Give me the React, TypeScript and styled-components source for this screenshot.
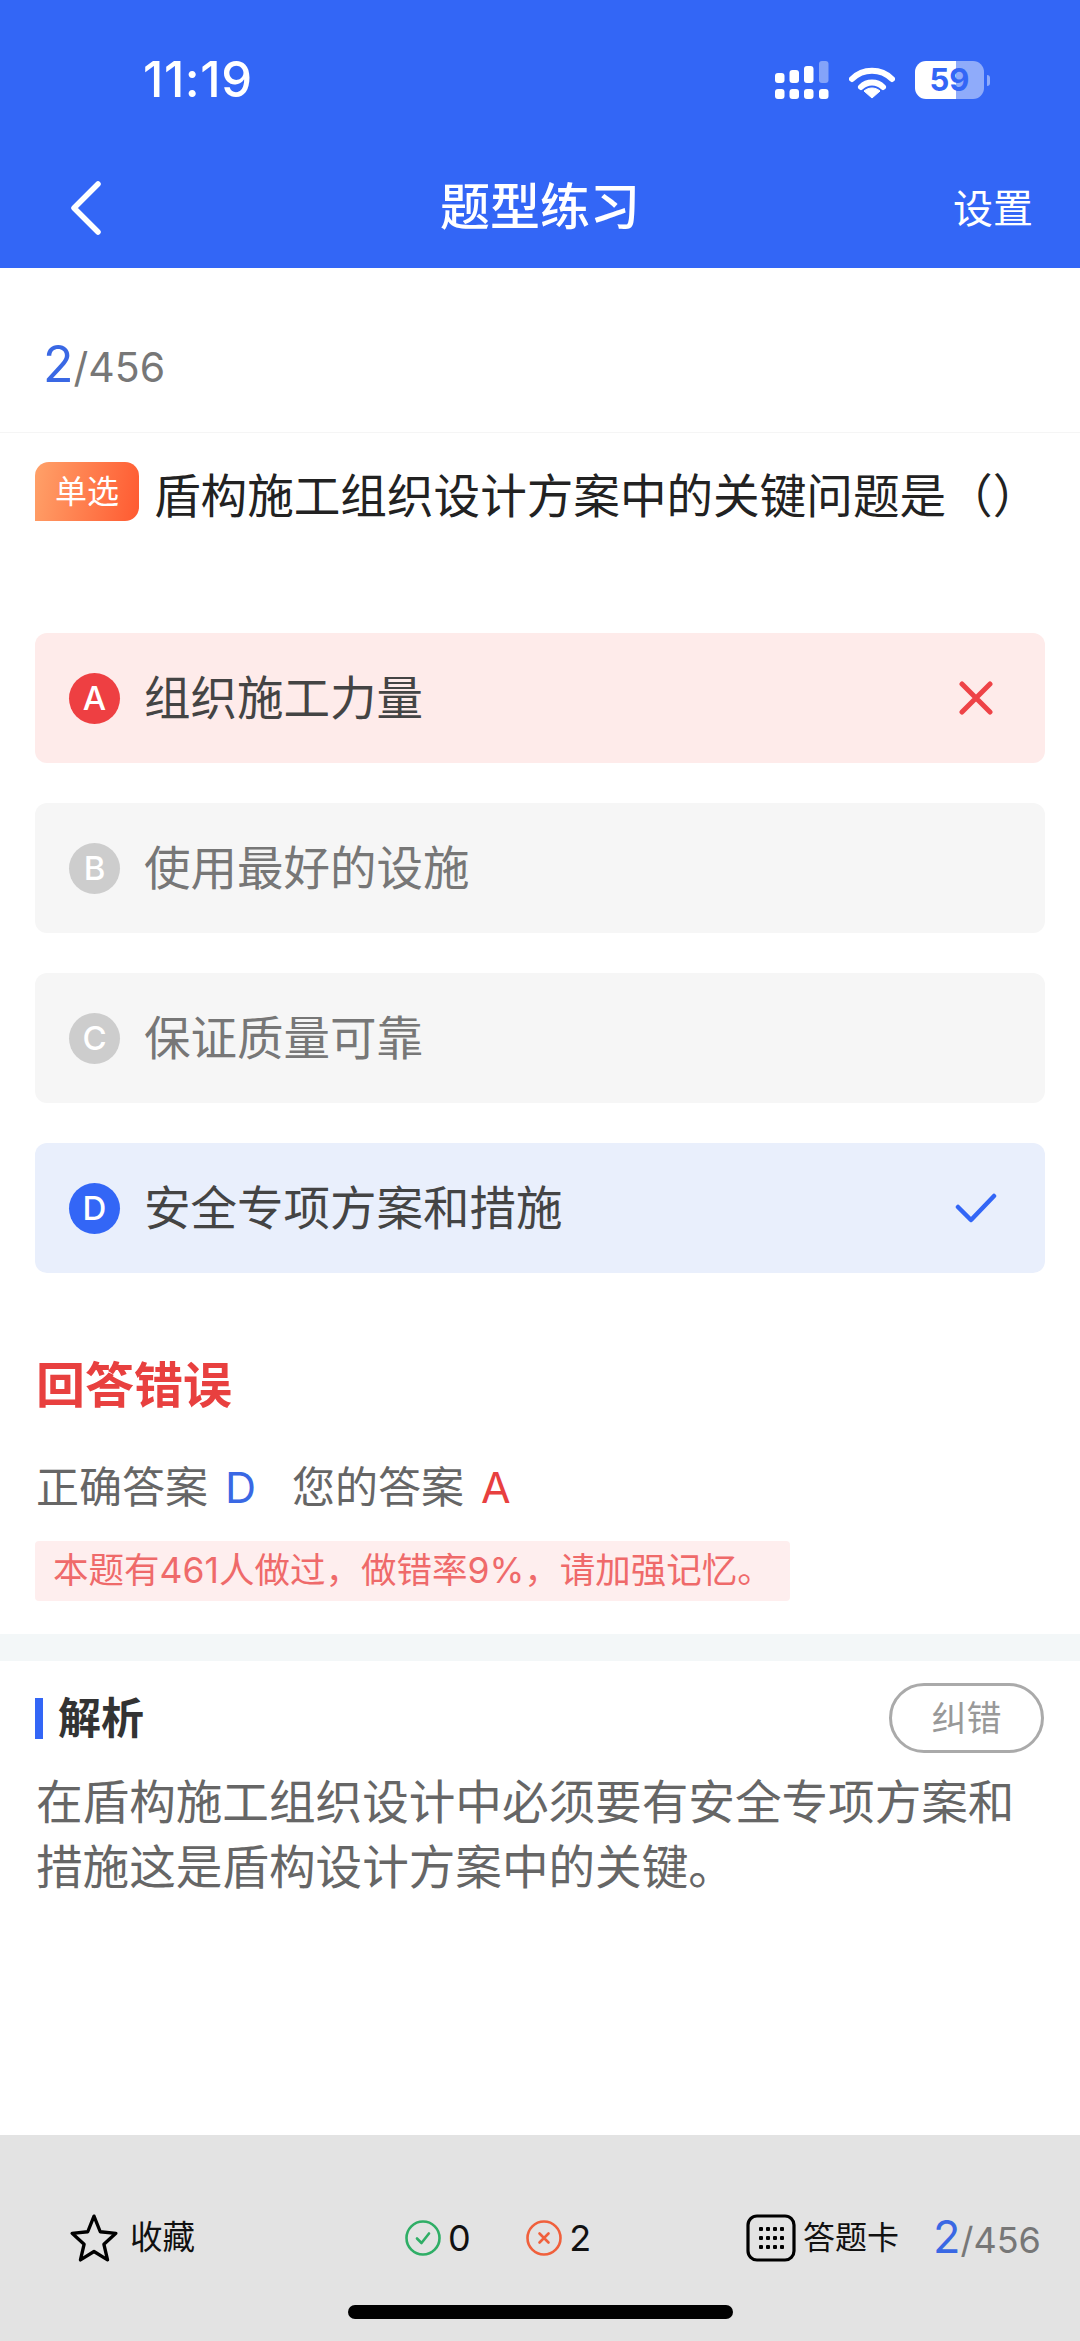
import {ReactElement} from "react";
import styled, {createGlobalStyle} from "styled-components";

const GlobalStyle = createGlobalStyle`
  html, body {
    margin: 0;
    padding: 0;
    background: #fff;
  }
  * {
    box-sizing: border-box;
  }
`;

const FONT = `Inter, "Noto Sans CJK SC", "Noto Sans", sans-serif`;
const BLUE = "#3366f6";
const TEXT_BLUE = "#3a68e4";
const RED = "#ee3f42";

const Page = styled.div`
  width: 1080px;
  height: 2341px;
  display: flex;
  flex-direction: column;
  font-family: ${FONT};
  background: #fff;
  overflow: hidden;
`;

const Header = styled.header`
  height: 268px;
  flex: none;
  background: ${BLUE};
  color: #fff;
`;

const StatusBar = styled.div`
  height: 160px;
  padding: 60px 96px 0 143px;
  display: flex;
  justify-content: space-between;
  align-items: flex-start;
`;

const Time = styled.div`
  font-size: 49px;
  font-weight: 500;
  line-height: 40px;
  letter-spacing: 0.6px;
`;

const StatusIcons = styled.div`
  display: flex;
  align-items: flex-start;
  margin-top: 1px;
`;

const Battery = styled.div`
  width: 69px;
  height: 38px;
  margin-left: 20px;
  border-radius: 11px;
  background: linear-gradient(90deg, #fff 59%, rgba(255, 255, 255, 0.45) 59%);
  color: ${BLUE};
  font-size: 31px;
  font-weight: 700;
  line-height: 38px;
  text-align: center;
  position: relative;

  &::after {
    content: "";
    position: absolute;
    right: -6px;
    top: 14px;
    width: 3px;
    height: 11px;
    border-radius: 0 3px 3px 0;
    background: rgba(255, 255, 255, 0.45);
  }
`;

const NavBar = styled.div`
  height: 108px;
  padding: 0 47px 12px 70px;
  display: flex;
  justify-content: space-between;
  align-items: center;
  position: relative;
`;

const NavTitle = styled.div`
  position: absolute;
  left: 0;
  right: 0;
  top: 22px;
  text-align: center;
  font-size: 50px;
  font-weight: 500;
  line-height: 50px;
`;

const NavAction = styled.div`
  font-size: 40px;
  line-height: 44px;
  margin-top: 2px;
`;

const Progress = styled.div`
  height: 165px;
  flex: none;
  padding: 66px 0 0 43px;
  border-bottom: 1px solid #f5f5f5;
  display: flex;
  align-items: baseline;
  color: #777;
  font-size: 41px;
  line-height: 60px;
`;

const ProgressCurrent = styled.span`
  color: ${TEXT_BLUE};
  font-size: 50px;
`;

const Question = styled.div`
  padding: 29px 35px 0;
  display: flex;
  align-items: flex-start;
`;

const TypeTag = styled.div`
  width: 104px;
  height: 59px;
  flex: none;
  margin-right: 15px;
  border-radius: 14px 14px 14px 0;
  background: linear-gradient(100deg, #ffa169, #ff5a31);
  color: #fff;
  font-size: 32px;
  line-height: 59px;
  text-align: center;
`;

const QuestionText = styled.div`
  margin-top: 4px;
  font-size: 46.6px;
  line-height: 60px;
  color: #222;
  white-space: nowrap;
`;

const Options = styled.div`
  margin-top: 107px;
  padding: 0 35px;
  display: flex;
  flex-direction: column;
  gap: 40px;
`;

type OptionState = "wrong" | "right" | "idle";

const optionBg: Record<OptionState, string> = {
  wrong: "#feebea",
  right: "#e9effc",
  idle: "#f6f6f6",
};

const badgeBg: Record<OptionState, string> = {
  wrong: RED,
  right: BLUE,
  idle: "#cdcdcd",
};

const OptionRow = styled.div<{ $state: OptionState }>`
  height: 130px;
  padding: 0 52px 0 34px;
  display: flex;
  align-items: center;
  border-radius: 12px;
  background: ${p => optionBg[p.$state]};
  color: ${p => (p.$state === "idle" ? "#777" : "#444")};
`;

const OptionBadge = styled.div<{ $state: OptionState }>`
  width: 51px;
  height: 51px;
  flex: none;
  margin-right: 24px;
  border-radius: 50%;
  background: ${p => badgeBg[p.$state]};
  color: #fff;
  font-size: 33px;
  font-weight: 500;
  line-height: 51px;
  text-align: center;
`;

const OptionText = styled.div`
  flex: 1;
  font-size: 46.5px;
  line-height: 60px;
`;

const Result = styled.div`
  padding: 85px 35px 0 36px;
`;

const ResultTitle = styled.div`
  font-size: 49px;
  font-weight: 700;
  line-height: 56px;
  color: #e8403f;
`;

const AnswerLine = styled.div`
  margin-top: 43px;
  display: flex;
  font-size: 43px;
  line-height: 60px;
  color: #666;
`;

const AnswerGroup = styled.div`
  margin-right: 36px;
`;

const AnswerLetter = styled.span<{ $right?: boolean }>`
  margin-left: 17px;
  color: ${p => (p.$right ? TEXT_BLUE : "#e8403f")};
`;

const Hint = styled.div`
  width: 755px;
  height: 60px;
  margin: 24px 0 0 -1px;
  padding-left: 18px;
  border-radius: 4px;
  background: #feeeee;
  color: #ef6a6a;
  font-size: 35.5px;
  line-height: 60px;
  white-space: nowrap;
`;

const Band = styled.div`
  height: 27px;
  margin-top: 33px;
  flex: none;
  background: #f3f7f8;
`;

const Analysis = styled.div`
  flex: 1;
  padding: 22px 36px 0;
`;

const AnalysisHead = styled.div`
  display: flex;
  align-items: center;
  justify-content: space-between;
`;

const AnalysisTitle = styled.div`
  margin-left: -1px;
  padding-left: 15px;
  border-left: 8px solid ${BLUE};
  height: 41px;
  font-size: 43px;
  font-weight: 700;
  line-height: 41px;
  color: #333;
`;

const ReportButton = styled.div`
  width: 155px;
  height: 70px;
  border: 3px solid #aaa;
  border-radius: 35px;
  color: #999;
  font-size: 35px;
  line-height: 64px;
  text-align: center;
`;

const AnalysisText = styled.div`
  margin-top: 17px;
  font-size: 46.6px;
  line-height: 65px;
  color: #666;
`;

const Footer = styled.footer`
  height: 206px;
  flex: none;
  background: #e3e3e3;
  display: flex;
  flex-direction: column;
  align-items: center;
`;

const ToolRow = styled.div`
  width: 100%;
  height: 170px;
  padding: 78px 40px 0 69px;
  display: grid;
  grid-template-columns: 336px 341px 1fr;
  align-items: start;
`;

const ToolGroup = styled.div`
  height: 50px;
  display: flex;
  align-items: center;
  color: #111;
  white-space: nowrap;
`;

const ToolLabel = styled.span`
  margin-left: 11px;
  font-size: 32.5px;
  line-height: 50px;
`;

const Count = styled.span`
  margin: 0 55.5px 0 7px;
  font-size: 36px;
  line-height: 50px;
`;

const CardLabel = styled.span`
  flex: none;
  margin-left: 7px;
  font-size: 32px;
  line-height: 50px;
`;

const FooterProgress = styled.div`
  flex: none;
  margin-left: 34px;
  display: flex;
  align-items: baseline;
  color: #777;
  font-size: 36px;
  line-height: 50px;
`;

const FooterCurrent = styled.span`
  color: ${TEXT_BLUE};
  font-size: 45px;
`;

const HomeBar = styled.div`
  width: 385px;
  height: 14px;
  border-radius: 7px;
  background: #000;
`;

const options: { key: string; text: string; state: OptionState }[] = [
  {key: "A", text: "组织施工力量", state: "wrong"},
  {key: "B", text: "使用最好的设施", state: "idle"},
  {key: "C", text: "保证质量可靠", state: "idle"},
  {key: "D", text: "安全专项方案和措施", state: "right"},
];

function SignalIcon() {
  const cols = [0, 14.5, 29, 44];
  const tops = [12, 9, 5, 0];
  return (
    <svg width="54" height="38" viewBox="0 0 54 38">
      {cols.map((x, i) => (
        <g key={x} fill="#fff">
          <rect x={x} y={tops[i]} width="9.5" height={22 - tops[i]} rx="3" opacity={i === 3 ? 0.4 : 1}/>
          <rect x={x} y="28" width="9.5" height="10" rx="3"/>
        </g>
      ))}
    </svg>
  );
}

function WifiIcon() {
  return (
    <svg width="46" height="32" viewBox="0 0 46 32" style={{marginLeft: 20, marginTop: 6}}>
      <path d="M3 12 C14 1 32 1 43 12" fill="none" stroke="#fff" strokeWidth="6" strokeLinecap="round"/>
      <path d="M12 20 C18 14 28 14 34 20" fill="none" stroke="#fff" strokeWidth="6" strokeLinecap="round"/>
      <path d="M23 31 L15 24 C20 20 26 20 31 24 Z" fill="#fff" stroke="#fff" strokeLinejoin="round"/>
    </svg>
  );
}

function OptionMark({state}: { state: OptionState }) {
  if (state === "wrong") {
    return (
      <svg width="34" height="34" viewBox="0 0 34 34">
        <path d="M3 3 L31 31 M31 3 L3 31" stroke="#ee4347" strokeWidth="5" strokeLinecap="round"/>
      </svg>
    );
  }
  if (state === "right") {
    return (
      <svg width="42" height="30" viewBox="0 0 42 30" style={{marginRight: -4}}>
        <path d="M3 14 L16 27 L39 3" fill="none" stroke={BLUE} strokeWidth="4.5" strokeLinecap="round" strokeLinejoin="round"/>
      </svg>
    );
  }
  return null;
}

export default function App(): ReactElement {
  return (
    <Page>
      <GlobalStyle/>
      <Header>
        <StatusBar>
          <Time>11:19</Time>
          <StatusIcons>
            <SignalIcon/>
            <WifiIcon/>
            <Battery>59</Battery>
          </StatusIcons>
        </StatusBar>
        <NavBar>
          <svg width="32" height="54" viewBox="0 0 32 54">
            <path d="M28 3 L4 27 L28 51" fill="none" stroke="#fff" strokeWidth="5.5" strokeLinecap="round" strokeLinejoin="round"/>
          </svg>
          <NavTitle>题型练习</NavTitle>
          <NavAction>设置</NavAction>
        </NavBar>
      </Header>

      <Progress>
        <ProgressCurrent>2</ProgressCurrent>/456
      </Progress>

      <Question>
        <TypeTag>单选</TypeTag>
        <QuestionText>盾构施工组织设计方案中的关键问题是（）</QuestionText>
      </Question>

      <Options>
        {options.map(o => (
          <OptionRow key={o.key} $state={o.state}>
            <OptionBadge $state={o.state}>{o.key}</OptionBadge>
            <OptionText>{o.text}</OptionText>
            <OptionMark state={o.state}/>
          </OptionRow>
        ))}
      </Options>

      <Result>
        <ResultTitle>回答错误</ResultTitle>
        <AnswerLine>
          <AnswerGroup>正确答案<AnswerLetter $right>D</AnswerLetter></AnswerGroup>
          <AnswerGroup>您的答案<AnswerLetter>A</AnswerLetter></AnswerGroup>
        </AnswerLine>
        <Hint>本题有461人做过，做错率9%，请加强记忆。</Hint>
      </Result>

      <Band/>

      <Analysis>
        <AnalysisHead>
          <AnalysisTitle>解析</AnalysisTitle>
          <ReportButton>纠错</ReportButton>
        </AnalysisHead>
        <AnalysisText>在盾构施工组织设计中必须要有安全专项方案和措施这是盾构设计方案中的关键。</AnalysisText>
      </Analysis>

      <Footer>
        <ToolRow>
          <ToolGroup>
            <svg width="50" height="50" viewBox="0 0 48 48">
              <path d="M24 3 L30 18 L45 19.5 L33.5 30 L37 45 L24 37 L11 45 L14.5 30 L3 19.5 L18 18 Z" fill="none" stroke="#000" strokeWidth="3.2" strokeLinejoin="round"/>
            </svg>
            <ToolLabel>收藏</ToolLabel>
          </ToolGroup>
          <ToolGroup>
            <svg width="36" height="36" viewBox="0 0 36 36">
              <circle cx="18" cy="18" r="16.5" fill="none" stroke="#2fae66" strokeWidth="2.6"/>
              <path d="M12 18.5 L16.5 23 L24 13.5" fill="none" stroke="#2fae66" strokeWidth="2.6" strokeLinecap="round" strokeLinejoin="round"/>
            </svg>
            <Count>0</Count>
            <svg width="36" height="36" viewBox="0 0 36 36">
              <circle cx="18" cy="18" r="16.5" fill="none" stroke="#f0603c" strokeWidth="2.6"/>
              <path d="M13.5 13.5 L22.5 22.5 M22.5 13.5 L13.5 22.5" stroke="#f0603c" strokeWidth="2.6" strokeLinecap="round"/>
            </svg>
            <Count>2</Count>
          </ToolGroup>
          <ToolGroup>
            <svg width="50" height="48" viewBox="0 0 50 48">
              <rect x="2" y="2" width="46" height="44" rx="9" fill="none" stroke="#000" strokeWidth="3.2"/>
              {[15, 24, 33].map(y => [15, 22, 29, 36].map(x => (
                <rect key={`${x}-${y}`} x={x - 2} y={y - 2} width="4" height="4" rx="1" fill="#000"/>
              )))}
            </svg>
            <CardLabel>答题卡</CardLabel>
            <FooterProgress>
              <FooterCurrent>2</FooterCurrent>/456
            </FooterProgress>
          </ToolGroup>
        </ToolRow>
        <HomeBar/>
      </Footer>
    </Page>
  );
}
